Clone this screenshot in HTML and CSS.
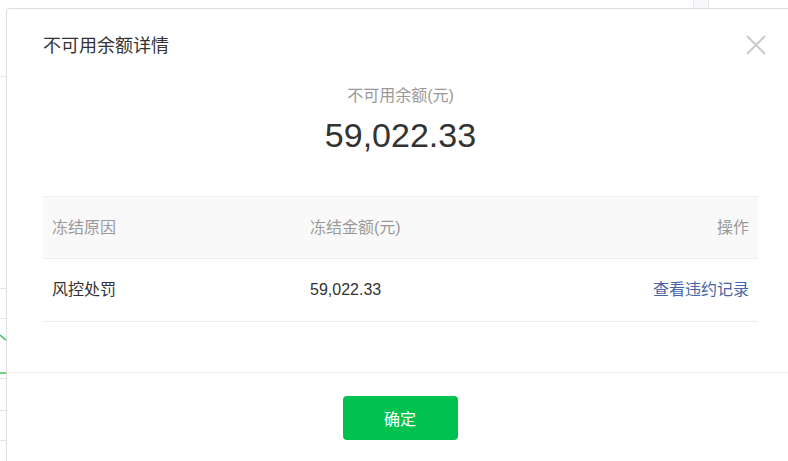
FILE: index.html
```html
<!DOCTYPE html>
<html lang="zh-CN">
<head>
<meta charset="utf-8">
<title>不可用余额详情</title>
<link rel="stylesheet" href="styles.css">
</head>
<body>
<div class="page">
  <div class="topbar"><span class="tab"></span></div>
  <div class="main">
    <div class="side">
      <div class="srow r1"></div>
      <div class="srow r2"></div>
      <div class="srow r3"></div>
      <div class="chart">
        <svg width="7" height="60" viewBox="0 0 7 60"><path d="M0 16 L7 22" stroke="#3cc254" stroke-width="1.5" fill="none"/><path d="M0 54 L7 54" stroke="#3cc254" stroke-width="1.5" fill="none"/></svg>
      </div>
      <div class="srow r4"></div>
      <div class="srow r5"></div>
    </div>
  </div>
</div>

<div class="modal">
  <div class="modal-head">
    <h2 class="modal-title">不可用余额详情</h2>
    <button class="close" aria-label="关闭">
      <svg width="20" height="20" viewBox="0 0 20 20"><path d="M1 1 L19 19 M19 1 L1 19" stroke="#cbcbcb" stroke-width="2" fill="none"/></svg>
    </button>
  </div>
  <div class="modal-body">
    <div class="summary">
      <div class="summary-label">不可用余额(元)</div>
      <div class="summary-value">59,022.33</div>
    </div>
    <div class="table">
      <div class="tr th">
        <div class="td">冻结原因</div>
        <div class="td">冻结金额(元)</div>
        <div class="td right">操作</div>
      </div>
      <div class="tr">
        <div class="td">风控处罚</div>
        <div class="td">59,022.33</div>
        <div class="td right"><a class="link" href="#">查看违约记录</a></div>
      </div>
    </div>
  </div>
  <div class="modal-foot">
    <button class="btn-primary">确定</button>
  </div>
</div>
</body>
</html>
```

FILE: styles.css
```css
* { box-sizing: border-box; }
html, body {
  margin: 0;
  padding: 0;
  background: #fff;
  width: 788px;
  height: 461px;
  overflow: hidden;
  font-family: "Liberation Sans", "Noto Sans CJK SC", sans-serif;
}
.page { display: flex; flex-direction: column; height: 461px; }
.topbar { height: 8px; display: flex; }
.tab {
  margin-left: 693px;
  width: 16px;
  height: 8px;
  background: #f6f8fb;
  border-left: 1px solid #e6e8ec;
  border-right: 1px solid #e6e8ec;
}
.main { flex: 1; display: flex; }
.side { width: 7px; display: flex; flex-direction: column; }
.srow { border-bottom: 1px solid #e4e4e4; }
.r1 { height: 69px; }
.r2 { height: 212px; }
.r3 { height: 30px; }
.chart { height: 60px; border-bottom: 1px solid #e4e4e4; }
.chart svg { display: block; }
.r4 { height: 32px; }
.r5 { height: 30px; }

.modal {
  position: absolute;
  left: 6px;
  top: 8px;
  width: 788px;
  height: 470px;
  background: #fff;
  border: 1px solid #dedede;
  border-radius: 4px;
}
.modal-head {
  position: relative;
  padding: 25px 35px 0 36px;
}
.modal-title {
  margin: 0;
  font-size: 18px;
  line-height: 24px;
  font-weight: normal;
  color: #333;
}
.close {
  position: absolute;
  right: 27px;
  top: 26px;
  width: 20px;
  height: 20px;
  padding: 0;
  border: 0;
  background: none;
}
.close svg { display: block; }
.modal-body { padding: 0 35px 50px 36px; }
.summary { text-align: center; margin-top: 27px; }
.summary-label { font-size: 16px; line-height: 22px; color: #999; }
.summary-value { font-size: 34px; line-height: 44px; color: #333; margin-top: 6px; }
.table { margin-top: 39px; }
.tr {
  display: grid;
  grid-template-columns: 258px 1fr 1fr;
  align-items: center;
  height: 63px;
  border-bottom: 1px solid #ececec;
  font-size: 16px;
  color: #333;
}
.th {
  height: 63px;
  background: #f9f9f9;
  border-top: 1px solid #efefef;
  color: #999;
}
.td { padding: 0 9px; line-height: 22px; }
.right { text-align: right; }
.link { color: #4565a8; text-decoration: none; }
.modal-foot {
  border-top: 1px solid #ececec;
  padding-top: 23px;
  display: flex;
  justify-content: center;
}
.btn-primary {
  width: 115px;
  height: 44px;
  border: 0;
  border-radius: 4px;
  background: #00c250;
  color: #fff;
  font-size: 16px;
  font-family: "Liberation Sans", "Noto Sans CJK SC", sans-serif;
}
```
